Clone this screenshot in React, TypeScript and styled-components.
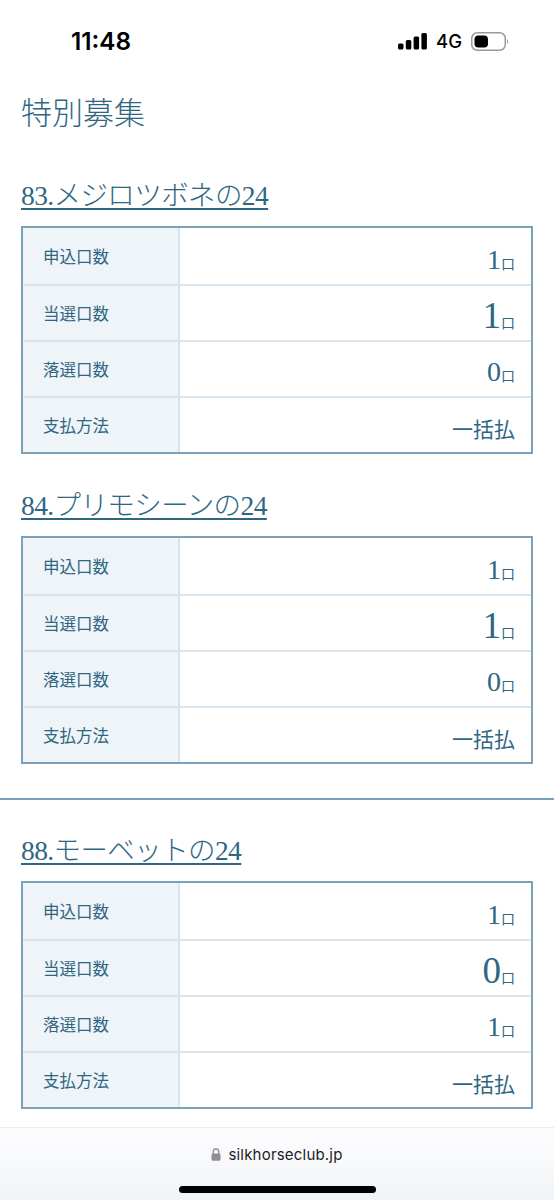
import React from 'react';
import styled, { createGlobalStyle } from 'styled-components';

const GlobalStyle = createGlobalStyle`
  html, body {
    margin: 0;
    padding: 0;
    background: #fff;
  }
  * {
    box-sizing: border-box;
  }
`;

const serif = `"Liberation Serif", "Noto Sans CJK JP", serif`;
const sans = `"Noto Sans CJK JP", sans-serif`;
const ink = '#2f6783';

type Row = { label: string; value: string; unit?: string; big?: boolean };
type Lot = { name: string; rows: Row[] };

const firstGroup: Lot[] = [
  {
    name: '83.メジロツボネの24',
    rows: [
      { label: '申込口数', value: '1', unit: '口' },
      { label: '当選口数', value: '1', unit: '口', big: true },
      { label: '落選口数', value: '0', unit: '口' },
      { label: '支払方法', value: '一括払' },
    ],
  },
  {
    name: '84.プリモシーンの24',
    rows: [
      { label: '申込口数', value: '1', unit: '口' },
      { label: '当選口数', value: '1', unit: '口', big: true },
      { label: '落選口数', value: '0', unit: '口' },
      { label: '支払方法', value: '一括払' },
    ],
  },
];

const secondGroup: Lot[] = [
  {
    name: '88.モーベットの24',
    rows: [
      { label: '申込口数', value: '1', unit: '口' },
      { label: '当選口数', value: '0', unit: '口', big: true },
      { label: '落選口数', value: '1', unit: '口' },
      { label: '支払方法', value: '一括払' },
    ],
  },
];

function LotBlock({ lot }: { lot: Lot }) {
  return (
    <LotWrapper>
      <LotName href='#'>{lot.name}</LotName>
      <ResultTable>
        {lot.rows.map((row) => (
          <ResultRow key={row.label}>
            <RowLabel>{row.label}</RowLabel>
            <RowValue>
              <ValueText big={row.big} isWord={!row.unit}>{row.value}</ValueText>
              {row.unit && <Unit>{row.unit}</Unit>}
            </RowValue>
          </ResultRow>
        ))}
      </ResultTable>
    </LotWrapper>
  );
}

export default function App() {
  return (
    <Page>
      <GlobalStyle />
      <StatusBar>
        <Clock>11:48</Clock>
        <StatusIcons>
          <svg width='29' height='17' viewBox='0 0 29 17'>
            <rect x='0' y='10.5' width='5.5' height='6' rx='1.5' fill='#000' />
            <rect x='7.8' y='7' width='5.5' height='9.5' rx='1.5' fill='#000' />
            <rect x='15.6' y='3.5' width='5.5' height='13' rx='1.5' fill='#000' />
            <rect x='23.4' y='0' width='5.5' height='16.5' rx='1.5' fill='#000' />
          </svg>
          <Network>4G</Network>
          <svg width='38' height='19' viewBox='0 0 38 19'>
            <rect x='0.75' y='0.75' width='33.5' height='17.5' rx='5.5' fill='none' stroke='#9a9a9a' strokeWidth='1.5' />
            <rect x='3.5' y='3.5' width='13.5' height='12' rx='3.8' fill='#000' />
            <path d='M36 7 C37.4 7.6 37.4 11.4 36 12 Z' fill='#9a9a9a' />
          </svg>
        </StatusIcons>
      </StatusBar>
      <Title>特別募集</Title>
      <FirstGroup>
        {firstGroup.map((lot) => (
          <LotBlock key={lot.name} lot={lot} />
        ))}
      </FirstGroup>
      <Divider />
      <SecondGroup>
        {secondGroup.map((lot) => (
          <LotBlock key={lot.name} lot={lot} />
        ))}
      </SecondGroup>
      <BrowserBar>
        <UrlLine>
          <svg width='10' height='13' viewBox='0 0 10 13'>
            <path d='M2.2 6V3.8a2.8 2.8 0 0 1 5.6 0V6' fill='none' stroke='#8e8e93' strokeWidth='1.3' />
            <rect x='0.5' y='5.5' width='9' height='7.2' rx='1.4' fill='#8e8e93' />
          </svg>
          <UrlText>silkhorseclub.jp</UrlText>
        </UrlLine>
        <HomeBar />
      </BrowserBar>
    </Page>
  );
}

const Page = styled.div`
  width: 554px;
  height: 1200px;
  overflow: hidden;
  display: flex;
  flex-direction: column;
  background: #fff;
`;

const StatusBar = styled.div`
  height: 82px;
  flex: none;
  display: flex;
  align-items: center;
  justify-content: space-between;
  padding: 0 45px 0 71px;
`;

const Clock = styled.span`
  font-family: 'Inter', 'Liberation Sans', sans-serif;
  font-size: 24.3px;
  font-weight: 600;
  color: #000;
`;

const StatusIcons = styled.div`
  display: flex;
  align-items: center;
  gap: 9px;
`;

const Network = styled.span`
  font-family: 'Inter', 'Liberation Sans', sans-serif;
  font-size: 18.5px;
  font-weight: 500;
  color: #000;
`;

const Title = styled.h1`
  margin: 0;
  padding-left: 21px;
  height: 64px;
  font-family: ${serif};
  font-size: 31px;
  line-height: 64px;
  font-weight: 300;
  color: ${ink};
`;

const FirstGroup = styled.div`
  display: flex;
  flex-direction: column;
  gap: 35px;
  padding: 33px 21px 0;
`;

const SecondGroup = styled.div`
  padding: 34px 21px 0;
`;

const LotWrapper = styled.section`
  display: flex;
  flex-direction: column;
  align-items: flex-start;
  gap: 14px;
`;

const LotName = styled.a`
  height: 33px;
  font-family: ${serif};
  font-size: 27.5px;
  line-height: 33px;
  font-weight: 300;
  letter-spacing: -0.6px;
  color: ${ink};
  text-decoration: underline;
  text-decoration-thickness: 1.5px;
  text-underline-offset: 3px;
`;

const ResultTable = styled.div`
  width: 512px;
  height: 228px;
  border: 2px solid #7aa3ba;
  display: grid;
  grid-template-rows: repeat(4, 1fr);
`;

const ResultRow = styled.div`
  display: grid;
  grid-template-columns: 157px 1fr;
  & + & {
    border-top: 2px solid #d8e5ef;
  }
`;

const RowLabel = styled.div`
  display: flex;
  align-items: center;
  padding: 0 0 0 20px;
  background: #eff4f8;
  border-right: 2px solid #d8e5ef;
  font-family: ${sans};
  font-size: 16.5px;
  color: ${ink};
`;

const RowValue = styled.div`
  display: flex;
  align-items: baseline;
  justify-content: flex-end;
  padding: 0 16px 0 0;
  align-self: end;
  height: 42px;
`;

const ValueText = styled.span<{ big?: boolean; isWord?: boolean }>`
  font-family: ${serif};
  font-size: ${({ big, isWord }) => (big ? '37px' : isWord ? '21px' : '28px')};
  line-height: ${({ isWord }) => (isWord ? '40px' : '36px')};
  font-weight: ${({ isWord }) => (isWord ? 400 : 300)};
  color: ${ink};
`;

const Unit = styled.span`
  font-family: ${sans};
  font-size: 14px;
  line-height: 36px;
  color: ${ink};
`;

const Divider = styled.hr`
  margin: 34px 0 0;
  height: 1.5px;
  border: 0;
  background: #7aa3ba;
`;

const BrowserBar = styled.div`
  margin-top: auto;
  height: 73px;
  flex: none;
  display: flex;
  flex-direction: column;
  align-items: center;
  border-top: 1px solid #ececec;
  background: linear-gradient(#fdfdfe, #f1f4f7);
`;

const UrlLine = styled.div`
  margin-top: 15px;
  display: flex;
  align-items: center;
  gap: 7px;
  height: 22px;
`;

const UrlText = styled.span`
  font-family: 'Inter', 'Liberation Sans', sans-serif;
  font-size: 15px;
  letter-spacing: 0.2px;
  color: #1c1c1e;
`;

const HomeBar = styled.div`
  margin-top: 21px;
  width: 197px;
  height: 7px;
  border-radius: 4px;
  background: #000;
`;
